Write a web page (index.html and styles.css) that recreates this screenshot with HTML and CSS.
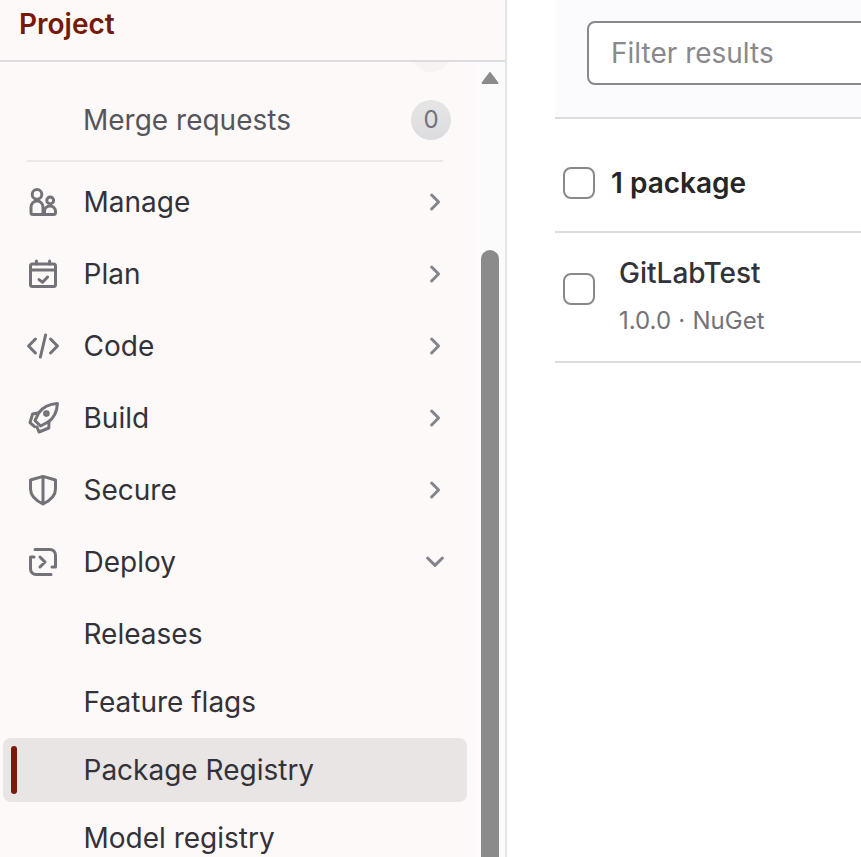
FILE: index.html
```html
<!DOCTYPE html>
<html lang="en">
<head>
  <meta charset="UTF-8">
  <title>Package Registry</title>
  <link rel="stylesheet" href="styles.css">
</head>
<body>
  <div class="page">
    <aside class="sidebar">
      <div class="sidebar-title">Project</div>
      <div class="sidebar-body">
        <nav class="nav">
          <div class="badge-peek"><span class="peek-circle"></span></div>
          <a class="nav-sub nav-muted">Merge requests<span class="count">0</span></a>
          <div class="nav-divider"></div>

          <a class="nav-item">
            <svg class="icon" viewBox="0 0 16 16"><circle cx="5" cy="4.200" r="2.400"/><circle cx="11.600" cy="7.200" r="1.700"/><path d="M3 14.250a1 1 0 0 1-1-1V10.500a3 3 0 0 1 6 0v3.750M3 14.250h10.250a1 1 0 0 0 1-1V12.700a2.750 2.750 0 0 0-5.500 0v1.550"/></svg>
            Manage
            <svg class="chevron" viewBox="0 0 16 16"><path d="M6.300 4.500 9.800 8l-3.500 3.500"/></svg>
          </a>
          <a class="nav-item">
            <svg class="icon" viewBox="0 0 16 16"><rect x="1.750" y="3" width="12.500" height="11.250" rx="1"/><path d="M1.750 6h12.500M4.700 1.500V3M11.300 1.500V3M6 10.800l1.800 1.300 2.500-2.600"/></svg>
            Plan
            <svg class="chevron" viewBox="0 0 16 16"><path d="M6.300 4.500 9.800 8l-3.500 3.500"/></svg>
          </a>
          <a class="nav-item">
            <svg class="icon" viewBox="0 0 16 16"><path d="M4.200 4.500.8 8l3.400 3.500M11.800 4.500 15.200 8l-3.400 3.500M9.300 2.500 6.700 13.500"/></svg>
            Code
            <svg class="chevron" viewBox="0 0 16 16"><path d="M6.300 4.500 9.800 8l-3.500 3.500"/></svg>
          </a>
          <a class="nav-item">
            <svg class="icon" viewBox="0 0 16 16"><path d="M15.200.8C15 5 13.500 8 10.500 10L6.800 12 4 9.300l1.800-3.800C8 2.500 11 1.100 15.200.8Z"/><circle cx="9.700" cy="5.800" r=".9"/><path d="M5.500 5.500 2.800 6 1.500 10.300l2.300 2M11 9.800 10.900 13 6 15l-1-2.500"/></svg>
            Build
            <svg class="chevron" viewBox="0 0 16 16"><path d="M6.300 4.500 9.800 8l-3.500 3.500"/></svg>
          </a>
          <a class="nav-item">
            <svg class="icon" viewBox="0 0 16 16"><path d="M8 1.200 14.250 3v4.500c0 3-2.300 5.600-6.250 7.500-3.950-1.900-6.250-4.500-6.250-7.500V3L8 1.200ZM8 1.200V15"/></svg>
            Secure
            <svg class="chevron" viewBox="0 0 16 16"><path d="M6.300 4.500 9.800 8l-3.500 3.500"/></svg>
          </a>
          <a class="nav-item">
            <svg class="icon" viewBox="0 0 16 16"><path d="M4 1.750h7.500a2.750 2.750 0 0 1 2.750 2.750v6h-1.750M12 14.250H4.500a2.750 2.750 0 0 1-2.750-2.750v-6H3.500M6.500 5.500 9 8l-2.500 2.500"/></svg>
            Deploy
            <svg class="chevron chevron-down" viewBox="0 0 16 16"><path d="M4.300 6 8 9.700 11.700 6"/></svg>
          </a>

          <a class="nav-sub">Releases</a>
          <a class="nav-sub">Feature flags</a>
          <a class="nav-sub nav-active"><span class="active-mark"></span>Package Registry</a>
          <a class="nav-sub">Model registry</a>
        </nav>
        <div class="scrollbar">
          <svg class="scroll-arrow" viewBox="0 0 18 14"><path d="M9 2 16.500 12H1.500Z"/></svg>
          <div class="scroll-thumb"></div>
        </div>
      </div>
    </aside>

    <main class="content">
      <div class="filter-bar">
        <input class="filter-input" type="text" placeholder="Filter results">
      </div>
      <div class="list-head">
        <input class="check" type="checkbox">
        <strong>1 package</strong>
      </div>
      <div class="package-row">
        <input class="check" type="checkbox">
        <div class="package-info">
          <div class="package-name">GitLabTest</div>
          <div class="package-meta">1.0.0 · NuGet</div>
        </div>
      </div>
    </main>
  </div>
</body>
</html>
```

FILE: styles.css
```css
* {
  margin: 0;
  padding: 0;
  box-sizing: border-box;
  font-family: 'Inter', sans-serif;
}

body {
  background-color: #fff;
  color: #303030;
  overflow: hidden;
}

.page {
  display: flex;
  height: 857px;
  overflow: hidden;
}

.sidebar {
  width: 507px;
  flex: none;
  display: flex;
  flex-direction: column;
  background-color: #fdf9f8;
  border-right: 2px solid #e6e4e4;
}

.sidebar-title {
  height: 62px;
  flex: none;
  padding: 8px 0 0 19px;
  font-size: 28px;
  line-height: 32px;
  font-weight: 600;
  color: #741a08;
  border-bottom: 2px solid #dcdce0;
}

.sidebar-body {
  flex: 1;
  display: flex;
  min-height: 0;
}

.nav {
  width: 475px;
  flex: none;
  overflow: hidden;
  font-size: 28px;
  color: #333238;
}

.nav a {
  display: flex;
  align-items: center;
  margin: 0 8px 4px 3px;
  padding-left: 80.5px;
  padding-right: 16px;
  height: 64px;
  position: relative;
}

.badge-peek {
  height: 26px;
  overflow: hidden;
  display: flex;
  justify-content: flex-end;
  padding-right: 24px;
}

.peek-circle {
  width: 40px;
  height: 40px;
  margin-top: -30px;
  border-radius: 50%;
  background-color: #f6f3f2;
}

.nav .nav-muted {
  color: #56555b;
  margin-bottom: 8px;
  padding-left: 80px;
}

.count {
  margin-left: auto;
  width: 40px;
  height: 40px;
  border-radius: 50%;
  background: linear-gradient(#e6e5e6, #dcdcde);
  color: #737278;
  font-size: 24px;
  text-align: center;
  line-height: 40px;
}

.nav-divider {
  height: 2px;
  margin: 0 32px 6px 27px;
  background-color: #ebe8e8;
}

.nav .nav-item {
  height: 68px;
  padding-left: 24px;
}

.nav .nav-item:nth-last-child(5) {
  margin-bottom: 6px;
}

.icon {
  width: 32px;
  height: 32px;
  margin-right: 24.5px;
  fill: none;
  stroke: #737278;
  stroke-width: 1.5;
  stroke-linecap: round;
  stroke-linejoin: round;
}

.chevron {
  width: 32px;
  height: 32px;
  margin-left: auto;
  fill: none;
  stroke: #85848a;
  stroke-width: 1.5;
  stroke-linecap: round;
  stroke-linejoin: round;
}

.nav .nav-active {
  background-color: #e8e5e4;
  border-radius: 8px;
}

.active-mark {
  position: absolute;
  left: 8px;
  top: 8px;
  width: 6px;
  height: 48px;
  border-radius: 3px;
  background-color: #7a1a0a;
}

.scrollbar {
  flex: 1;
  display: flex;
  flex-direction: column;
  align-items: center;
  background-color: #fcfbfb;
  padding-top: 9px;
}

.scroll-arrow {
  width: 18px;
  height: 14px;
  fill: #8b8b8b;
  stroke: #8b8b8b;
  stroke-width: 2;
  stroke-linejoin: round;
}

.scroll-thumb {
  width: 18px;
  flex: 1;
  margin-top: 165px;
  border-radius: 9px 9px 0 0;
  background-color: #8b8b8b;
}

.content {
  flex: 1;
  min-width: 0;
  padding-left: 48px;
}

.filter-bar {
  height: 119px;
  padding: 21px 0 0 32px;
  background-color: #fbfafd;
  border-bottom: 2px solid #dcdcde;
}

.filter-input {
  display: block;
  width: 400px;
  height: 64px;
  padding: 0 22px;
  font-size: 28px;
  background-color: #fff;
  border: 2px solid #89888d;
  border-radius: 8px;
  outline: none;
}

.filter-input::placeholder {
  color: #89888d;
  opacity: 1;
}

.list-head {
  height: 114px;
  display: flex;
  align-items: center;
  gap: 16px;
  padding: 16px 0 0 8px;
  border-bottom: 2px solid #dcdcde;
  font-size: 28px;
  color: #262626;
}

.list-head strong {
  font-weight: 600;
}

.check {
  appearance: none;
  width: 32px;
  height: 32px;
  flex: none;
  background-color: #fff;
  border: 2px solid #89888d;
  border-radius: 8px;
}

.package-row {
  height: 130px;
  display: flex;
  align-items: flex-start;
  gap: 24px;
  padding: 22px 0 0 8px;
  border-bottom: 2px solid #dcdcde;
}

.package-row .check {
  margin-top: 18px;
}

.package-name {
  font-size: 28px;
  line-height: 36px;
  font-weight: 500;
  color: #333238;
}

.package-meta {
  margin-top: 14px;
  font-size: 24px;
  line-height: 32px;
  word-spacing: 0.5px;
  color: #737278;
}
```
